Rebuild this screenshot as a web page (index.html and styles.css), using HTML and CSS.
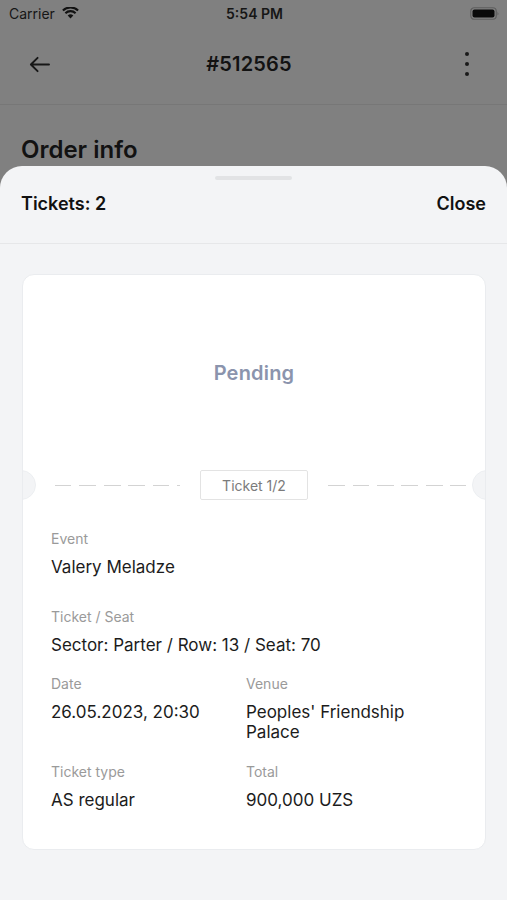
FILE: index.html
```html
<!DOCTYPE html>
<html>
<head>
<meta charset="utf-8">
<link rel="stylesheet" href="styles.css">
</head>
<body>
<div class="screen">
  <div class="status">
    <div class="status-left">
      <span>Carrier</span>
      <svg class="wifi" width="17" height="12" viewBox="0 0 17 12">
        <path d="M8.5 11.6 L5.7 8.6 A4 4 0 0 1 11.3 8.6 Z" fill="#111"/>
        <path d="M3.4 6.2 A7.3 7.3 0 0 1 13.6 6.2" fill="none" stroke="#111" stroke-width="2.1"/>
        <path d="M0.9 3.5 A11 11 0 0 1 16.1 3.5" fill="none" stroke="#111" stroke-width="2.1"/>
      </svg>
    </div>
    <div class="status-time">5:54 PM</div>
    <div class="status-right">
      <svg width="30" height="13" viewBox="0 0 30 13">
        <rect x="0.75" y="0.75" width="25.5" height="11.5" rx="3.5" fill="none" stroke="#5e5e5e" stroke-width="1.2"/>
        <rect x="2.5" y="2.5" width="22" height="8" rx="2" fill="#0a0a0a"/>
        <path d="M27.5 4.5 Q29.3 6.5 27.5 8.5 Z" fill="#5e5e5e"/>
      </svg>
    </div>
  </div>

  <div class="nav">
    <div class="nav-left">
      <svg width="21" height="17" viewBox="0 0 21 17">
        <path d="M20 8.5H2 M8.6 1.8 L1.9 8.5 L8.6 15.2" fill="none" stroke="#161616" stroke-width="1.9" stroke-linecap="round" stroke-linejoin="round"/>
      </svg>
    </div>
    <div class="nav-title">#512565</div>
    <div class="nav-right">
      <span class="dot"></span><span class="dot"></span><span class="dot"></span>
    </div>
  </div>

  <h1 class="page-title">Order info</h1>

  <div class="sheet">
    <div class="handle"></div>
    <div class="sheet-header">
      <span>Tickets: 2</span>
      <span>Close</span>
    </div>

    <div class="ticket">
      <div class="ticket-top">
        <span class="status-text">Pending</span>
      </div>
      <div class="ticket-divider">
        <span class="notch notch-left"></span>
        <div class="dash-cell dash-left"><span class="dash"></span></div>
        <div class="ticket-num">Ticket 1/2</div>
        <div class="dash-cell dash-right"><span class="dash"></span></div>
        <span class="notch notch-right"></span>
      </div>
      <div class="ticket-body">
        <div class="field field-first">
          <div class="label">Event</div>
          <div class="value">Valery Meladze</div>
        </div>
        <div class="field field-second">
          <div class="label">Ticket / Seat</div>
          <div class="value">Sector: Parter / Row: 13 / Seat: 70</div>
        </div>
        <div class="grid">
          <div class="field">
            <div class="label">Date</div>
            <div class="value">26.05.2023, 20:30</div>
          </div>
          <div class="field">
            <div class="label">Venue</div>
            <div class="value">Peoples' Friendship Palace</div>
          </div>
          <div class="field">
            <div class="label">Ticket type</div>
            <div class="value">AS regular</div>
          </div>
          <div class="field">
            <div class="label">Total</div>
            <div class="value">900,000 UZS</div>
          </div>
        </div>
      </div>
    </div>
  </div>
</div>
</body>
</html>
```

FILE: styles.css
```css
* { box-sizing: border-box; }
html, body {
  margin: 0;
  padding: 0;
}
body {
  width: 507px;
  height: 900px;
  overflow: hidden;
  background: #808080;
  font-family: Inter, "Noto Sans", sans-serif;
  color: #111;
}
.screen {
  display: flex;
  flex-direction: column;
  height: 900px;
}
.status {
  height: 28px;
  display: grid;
  grid-template-columns: 1fr auto 1fr;
  align-items: center;
  padding: 0 7px 1px 9px;
  font-size: 14px;
  color: #161616;
}
.status-left {
  display: flex;
  align-items: center;
  gap: 7px;
}
.wifi { margin-top: -1px; }
.status-time {
  font-weight: 600;
  font-size: 14px;
}
.status-right {
  display: flex;
  justify-content: flex-end;
}
.nav {
  height: 77px;
  display: grid;
  grid-template-columns: 1fr auto 1fr;
  align-items: center;
  padding: 0 38px 4px 29px;
  border-bottom: 1px solid #777;
}
.nav-left { display: flex; }
.nav-title {
  font-size: 20px;
  font-weight: 600;
  color: #121212;
  letter-spacing: 0.2px;
}
.nav-right {
  display: flex;
  flex-direction: column;
  align-items: flex-end;
  gap: 5.6px;
}
.dot {
  width: 4px;
  height: 4px;
  border-radius: 50%;
  background: #1a1a1a;
}
.page-title {
  margin: 30px 0 2px 21px;
  font-size: 24px;
  line-height: 29px;
  font-weight: 600;
  color: #121212;
}
.sheet {
  flex: 1;
  background: #f3f4f6;
  border-radius: 22px 22px 0 0;
  display: flex;
  flex-direction: column;
}
.handle {
  width: 77px;
  height: 4px;
  border-radius: 2px;
  background: #e2e3e5;
  margin: 10px auto 0;
}
.sheet-header {
  display: flex;
  justify-content: space-between;
  align-items: center;
  padding: 13px 21px 28px 21px;
  font-size: 18px;
  line-height: 22px;
  font-weight: 600;
  color: #111;
  border-bottom: 1px solid #e6e7e9;
}
.ticket {
  margin: 30px 21px 0 22px;
  background: #fff;
  border: 1px solid #eaecef;
  border-radius: 12px;
  overflow: hidden;
}
.ticket-top {
  height: 195px;
  display: flex;
  align-items: center;
  justify-content: center;
}
.status-text {
  font-size: 20px;
  font-weight: 600;
  color: #8b94ad;
  letter-spacing: 0.2px;
}
.ticket-divider {
  position: relative;
  height: 30px;
  display: grid;
  grid-template-columns: 1fr auto 1fr;
  column-gap: 20px;
  align-items: center;
}
.notch {
  position: absolute;
  top: 0;
  width: 30px;
  height: 30px;
  border-radius: 50%;
  background: #f3f4f6;
  border: 1px solid #eceef1;
}
.notch-left { left: -17px; }
.notch-right { right: -17px; }
.dash-cell { display: flex; }
.dash-left { padding-left: 32px; }
.dash-right { padding-right: 19px; }
.dash {
  flex: 1;
  height: 1px;
  background: repeating-linear-gradient(90deg, #d3d3d3 0 16.5px, transparent 16.5px 24.5px);
}
.ticket-num {
  width: 108px;
  height: 30px;
  border: 1px solid #e3e3e3;
  border-radius: 2px;
  display: flex;
  align-items: center;
  justify-content: center;
  font-size: 14px;
  color: #7b7b7b;
}
.ticket-body {
  padding: 30px 28px 39px 28px;
}
.label {
  font-size: 14px;
  line-height: 17px;
  color: #9a9a9a;
}
.value {
  margin-top: 10px;
  font-size: 17px;
  line-height: 20.5px;
  color: #1c1c1c;
}
.field-first { margin-bottom: 30px; }
.field-second { margin-bottom: 19.5px; }
.grid {
  display: grid;
  grid-template-columns: 195px 190px;
  row-gap: 20px;
}
```
